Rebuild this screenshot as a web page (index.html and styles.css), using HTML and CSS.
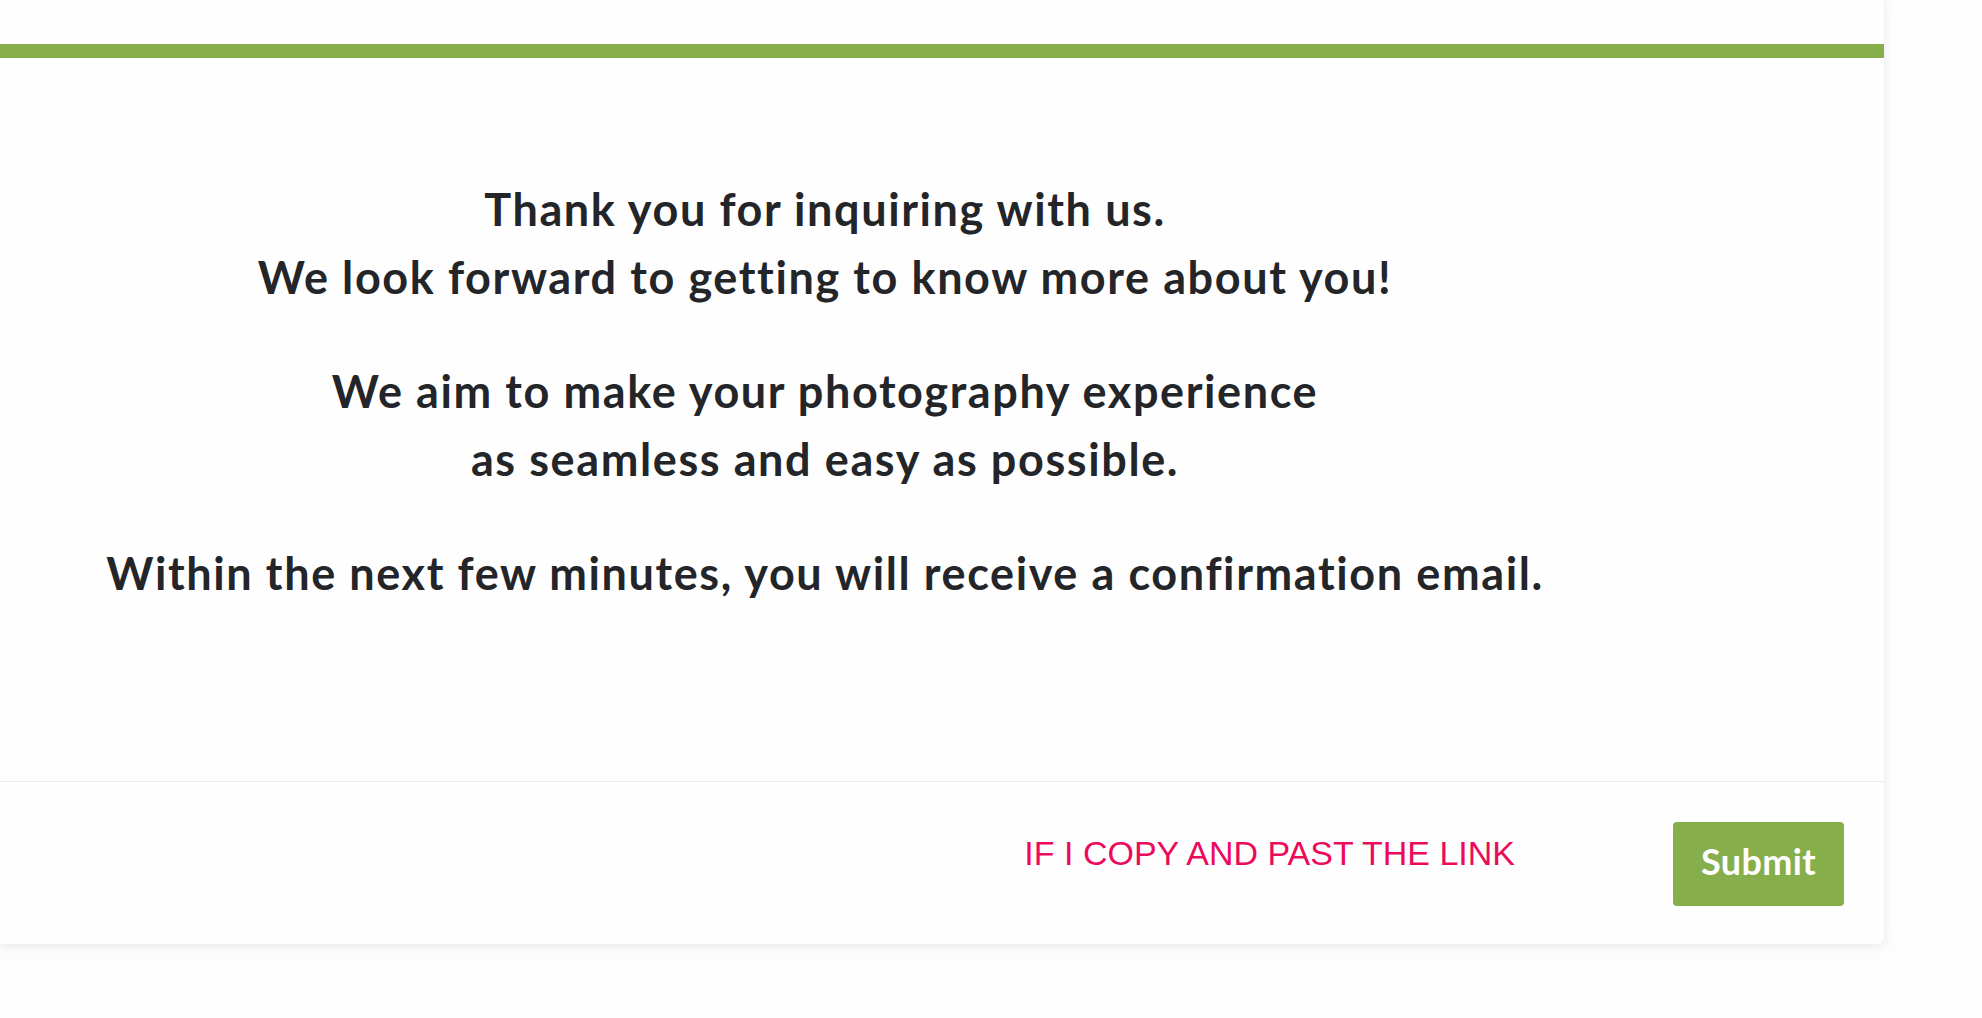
FILE: index.html
```html
<!DOCTYPE html>
<html lang="en">
<head>
<meta charset="utf-8">
<title>Thank you</title>
<link rel="stylesheet" href="styles.css">
</head>
<body>
<div class="card">
  <div class="card-top"></div>
  <div class="card-body">
    <div class="message">
      <p>Thank you for inquiring with us.<br>We look forward to getting to know more about you!</p>
      <p>We aim to make your photography experience<br>as seamless and easy as possible.</p>
      <p>Within the next few minutes, you will receive a confirmation email.</p>
    </div>
  </div>
  <div class="card-footer">
    <span class="note">IF I COPY AND PAST THE LINK</span>
    <button class="submit" type="button">Submit</button>
  </div>
</div>
</body>
</html>
```

FILE: styles.css
```css
html, body {
  margin: 0;
  padding: 0;
}
body {
  background: #fdfdfd;
  width: 1982px;
  height: 1018px;
  overflow: hidden;
}
.card {
  width: 1884px;
  background: #fefefe;
  border-radius: 0 0 6px 0;
  box-shadow: 0 2px 10px rgba(40, 40, 70, 0.10);
}
.card-top {
  height: 44px;
}
.card-body {
  border-top: 14px solid #86ae4a;
  padding: 117px 0 174px 0;
}
.message {
  width: 1650px;
  text-align: center;
  font-family: "Lato", "Open Sans", sans-serif;
  font-weight: 700;
  font-size: 45px;
  line-height: 68px;
  letter-spacing: 1.6px;
  font-variant-ligatures: none;
  color: #232529;
}
.message p {
  margin: 0 0 46px 0;
}
.message p:last-child {
  margin-bottom: 0;
}
.card-footer {
  border-top: 1px solid #ededf0;
  height: 162px;
  display: flex;
  justify-content: flex-end;
  align-items: center;
  padding-right: 40px;
  gap: 158px;
}
.note {
  font-family: "Liberation Sans", Arial, sans-serif;
  font-size: 34px;
  color: #ec0a5b;
  margin-bottom: 20px;
}
.submit {
  width: 171px;
  height: 84px;
  border: none;
  border-radius: 4px;
  background: #86ae4a;
  color: #ffffff;
  font-family: "Lato", "Open Sans", sans-serif;
  font-weight: 700;
  font-size: 36px;
  letter-spacing: 0.4px;
  padding: 0 0 6px 0;
  margin-top: 2px;
}
```
